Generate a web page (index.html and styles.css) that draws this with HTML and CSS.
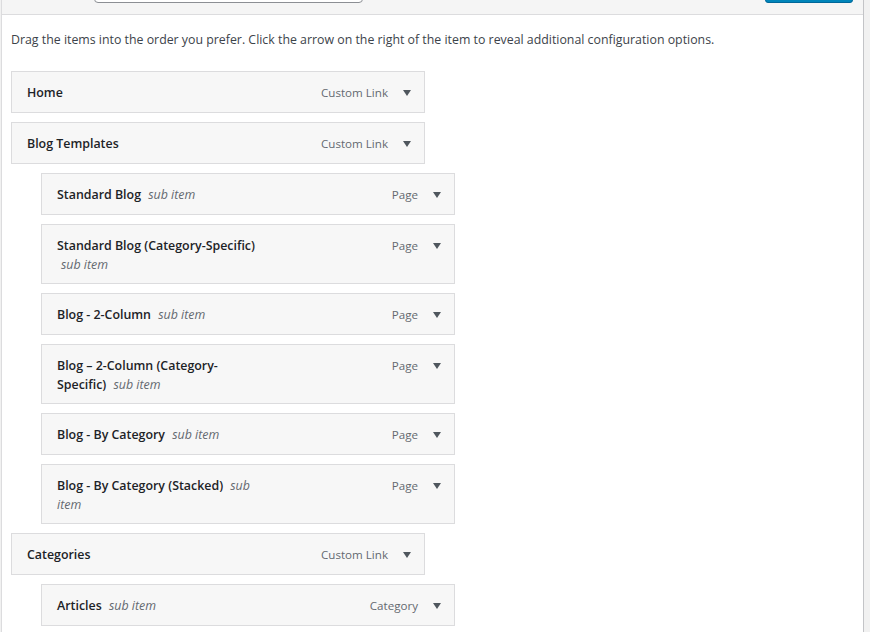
FILE: index.html
```html
<!DOCTYPE html>
<html>
<head>
  <title>Menu Structure</title>
<link rel="stylesheet" href="styles.css">
</head>
<body>
  <div class="menu-panel">
    <div class="menu-header">
      <input class="menu-name" type="text" value="">
      <button class="save-btn"></button>
    </div>
    <div class="menu-body">
      <p class="drag-note">Drag the items into the order you prefer. Click the arrow on the right of the item to reveal additional configuration options.</p>
      <ul class="menu-list">
        <li class="item depth-0">
          <div class="handle">
            <span class="title">Home</span>
            <span class="controls"><span class="type">Custom Link</span><span class="arrow"></span></span>
          </div>
        </li>
        <li class="item depth-0">
          <div class="handle">
            <span class="title">Blog Templates</span>
            <span class="controls"><span class="type">Custom Link</span><span class="arrow"></span></span>
          </div>
        </li>
        <li class="item depth-1">
          <div class="handle">
            <span class="title">Standard Blog <em class="sub">sub item</em></span>
            <span class="controls"><span class="type">Page</span><span class="arrow"></span></span>
          </div>
        </li>
        <li class="item depth-1">
          <div class="handle">
            <span class="title">Standard Blog (Category-Specific) <em class="sub">sub item</em></span>
            <span class="controls"><span class="type">Page</span><span class="arrow"></span></span>
          </div>
        </li>
        <li class="item depth-1">
          <div class="handle">
            <span class="title">Blog - 2-Column <em class="sub">sub item</em></span>
            <span class="controls"><span class="type">Page</span><span class="arrow"></span></span>
          </div>
        </li>
        <li class="item depth-1">
          <div class="handle">
            <span class="title">Blog – 2-Column (Category-Specific) <em class="sub">sub item</em></span>
            <span class="controls"><span class="type">Page</span><span class="arrow"></span></span>
          </div>
        </li>
        <li class="item depth-1">
          <div class="handle">
            <span class="title">Blog - By Category <em class="sub">sub item</em></span>
            <span class="controls"><span class="type">Page</span><span class="arrow"></span></span>
          </div>
        </li>
        <li class="item depth-1">
          <div class="handle">
            <span class="title">Blog - By Category (Stacked) <em class="sub">sub item</em></span>
            <span class="controls"><span class="type">Page</span><span class="arrow"></span></span>
          </div>
        </li>
        <li class="item depth-0">
          <div class="handle">
            <span class="title">Categories</span>
            <span class="controls"><span class="type">Custom Link</span><span class="arrow"></span></span>
          </div>
        </li>
        <li class="item depth-1">
          <div class="handle">
            <span class="title">Articles <em class="sub">sub item</em></span>
            <span class="controls"><span class="type">Category</span><span class="arrow"></span></span>
          </div>
        </li>
      </ul>
    </div>
  </div>
</body>
</html>
```

FILE: styles.css
```css
body {
  margin: 0;
  background-color: #f1f1f1;
  font-family: "Open Sans", "Noto Sans", sans-serif;
  color: #23282d;
}
.menu-panel {
  width: 861px;
  margin-left: 1px;
  border-left: 1px solid #dcdcde;
  border-right: 1px solid #c3c4c7;
  background-color: #fff;
  min-height: 632px;
}
.menu-header {
  height: 3px;
  padding-bottom: 11px;
  display: flex;
  align-items: flex-end;
  overflow: hidden;
  background-color: #f5f5f5;
  border-bottom: 1px solid #dcdcde;
}
.menu-name {
  margin: 0 0 0 92px;
  width: 269px;
  height: 30px;
  box-sizing: border-box;
  border: 1px solid #8c8f94;
  border-radius: 4px;
  background-color: #fff;
  flex-shrink: 0;
}
.save-btn {
  margin: 0 10px 0 auto;
  width: 88px;
  height: 30px;
  border: 1px solid #006799;
  border-radius: 3px;
  background-color: #0085ba;
  flex-shrink: 0;
}
.menu-body {
  padding: 1px 10px 20px 9px;
}
.drag-note {
  margin: 14px 0 21px 0;
  font-size: 12.35px;
  line-height: 20px;
  color: #3c434a;
}
.menu-list {
  list-style: none;
  margin: 0;
  padding: 0;
}
.item {
  margin-top: 9px;
}
.item:first-child {
  margin-top: 0;
}
.depth-1 {
  padding-left: 30px;
}
.handle {
  display: flex;
  justify-content: space-between;
  align-items: flex-start;
  width: 384px;
  min-height: 20px;
  padding: 10px 13px 10px 15px;
  border: 1px solid #dcdcde;
  background-color: #f7f7f7;
}
.title {
  max-width: 206px;
  padding-top: 1px;
  margin-bottom: -1px;
  font-size: 12.4px;
  line-height: 19px;
  font-weight: 600;
  color: #1d2327;
}
.sub {
  font-weight: normal;
  color: #646970;
  margin-left: 4px;
}
.controls {
  display: flex;
  align-items: center;
  padding-top: 1px;
  font-size: 11.6px;
  line-height: 19px;
  color: #646970;
}
.arrow {
  width: 0;
  height: 0;
  margin-left: 15px;
  border-left: 4px solid transparent;
  border-right: 4px solid transparent;
  border-top: 6px solid #50575e;
}
```
